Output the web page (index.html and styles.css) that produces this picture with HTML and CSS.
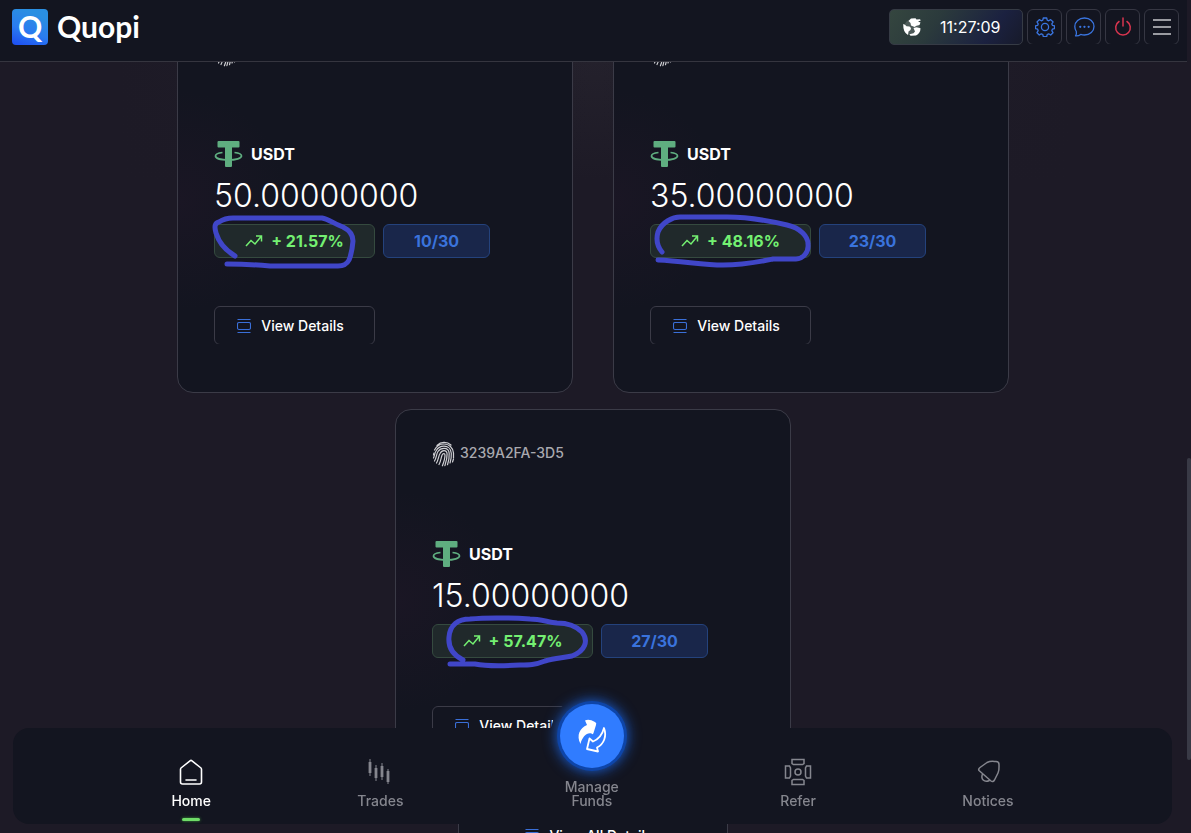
FILE: index.html
```html
<!DOCTYPE html>
<html lang="en">
<head>
    <meta charset="UTF-8">
    <meta name="viewport" content="width=device-width, initial-scale=1.0">
    <title>Quopi</title>
    <link rel="stylesheet" href="styles.css">
</head>
<body>
    <!-- shared icons -->
    <svg class="sprite" aria-hidden="true">
        <symbol id="finger" viewBox="0 0 24 26">
            <g fill="none" stroke="currentColor" stroke-width="1.2" stroke-linecap="round">
                <path d="M5 4.500C9 .5 15 .5 19 4M2.500 9C5 4 8.500 3 12 3c5 0 9 3.500 9.500 9v5"/>
                <path d="M1.500 17c1-2 1-5 2.500-7C6 6.500 9 5.200 12 5.200c4 0 7 2.800 7.300 7 .2 3.300-.3 6.800-1.300 9.800"/>
                <path d="M2.500 20c2-3 1.800-7 3.500-9.500C7.500 8.300 9.500 7.400 12 7.400c3 0 5 2 5.200 5 .2 4-.6 8-1.700 11.300"/>
                <path d="M4.500 22c2-3.500 2-7 3.500-9.500C9 10.500 10.500 9.600 12 9.600c2 0 3 1.400 3.100 3.400.1 4-1 8-2.200 11.600"/>
                <path d="M7 23.500c2-3.500 2-7 3.200-9.800.6-1.500 2.800-1.700 2.800.3 0 3.500-1.300 7.500-2.600 10.800M20.500 21l1-3M1.500 14l.4-2"/>
            </g>
        </symbol>
        <symbol id="tether" viewBox="0 0 28 28">
            <path fill="#5fae80" d="M4 1h20q1 0 1 1v4.500q0 1-1 1h-6.500V26q0 1-1 1h-5q-1 0-1-1V7.500H4q-1 0-1-1V2q0-1 1-1z"/>
            <path fill="none" stroke="#5fae80" stroke-width="1.700" d="M8 12.500C3.500 13 1 14.500 1 16c0 2.300 5.500 4 13 4s13-1.700 13-4c0-1.500-2.500-3-7-3.500"/>
        </symbol>
        <symbol id="trend" viewBox="0 0 18 14">
            <path fill="none" stroke="currentColor" stroke-width="1.500" d="M1 12l5-5.500 4 3.500 6.500-8M11 2h5.500v5.500"/>
        </symbol>
        <symbol id="frame" viewBox="0 0 14 14">
            <path fill="none" stroke="currentColor" stroke-width="1.100" d="M.5 .5h13M.5 13.500h13M2 3.500h10q1.500 0 1.500 1.500v4q0 1.500-1.500 1.500H2Q.5 10.500.5 9V5q0-1.500 1.500-1.500z"/>
        </symbol>
    </svg>

    <header class="topbar">
        <a class="brand" href="#">
            <span class="brand-mark">Q</span>
            <span class="brand-name">Quopi</span>
        </a>
        <div class="tools">
            <div class="clock">
                <svg width="20" height="20" viewBox="0 0 20 20" aria-hidden="true">
                    <circle cx="10" cy="10.500" r="8" fill="#fff" fill-opacity=".15"/>
                    <path fill="#fff" d="M1.200 7q2 .2 3.300 2.200l3 .3 1.500 1.500-.5 2-2 1.500-.5 3.500Q1 15.500 1.200 7zM6.500 4L9 1.500l4.500-.2 1 1.200 3.500-.2.8 1.200-2.800 1 2.500 1-1 2.500-3 .8-2 1.200L9 8.500 8.500 6zM11.500 11l3-.8 4 1Q18.500 16 14 18.500l-5.500.3-1-1.500 4-1 1.500-1.800z"/>
                </svg>
                <time>11:27:09</time>
            </div>
            <button class="tool blue" aria-label="Settings">
                <svg width="20" height="20" viewBox="0 0 20 20" fill="none" stroke="currentColor" stroke-width="1.300" stroke-linejoin="round">
                    <path d="M8.300 1h3.400l.5 2.200 1.500.6 2-1.200 2.400 2.400-1.300 1.900.7 1.500 2 .4v2.800l-2.100.6-.6 1.500 1.200 2-2.300 2.300-2-1.200-1.500.7-.5 2.200H8.300l-.5-2.200-1.500-.7-2 1.200L2 15.700l1.200-2-.6-1.500L.5 11.600V8.800l2.100-.4.6-1.500L2 5l2.300-2.400 2 1.200 1.500-.6z"/>
                    <circle cx="10" cy="10" r="3.600"/>
                </svg>
            </button>
            <button class="tool blue" aria-label="Messages">
                <svg width="22" height="20" viewBox="0 0 22 20" fill="none" stroke="currentColor" stroke-width="1.300" stroke-linejoin="round">
                    <path d="M11.500 1C17 1 21 4.800 21 9.500S17 18 11.500 18c-1.500 0-2.600-.2-3.800-.6C6 18.700 4 19 2.500 18.800c1-1.300 1.200-2.600.8-4.300C2.300 13 1.800 11.500 1.800 9.500 1.800 4.800 6 1 11.500 1z"/>
                    <path stroke-width="2.200" stroke-linecap="round" d="M7.200 9.800h.1M11.400 9.800h.1M15.600 9.800h.1"/>
                </svg>
            </button>
            <button class="tool red" aria-label="Log out">
                <svg width="18" height="20" viewBox="0 0 18 20" fill="none" stroke="currentColor" stroke-width="1.500" stroke-linecap="round">
                    <path d="M9 1v8M5 4.500a7.300 7.300 0 1 0 8 0"/>
                </svg>
            </button>
            <button class="tool" aria-label="Menu">
                <svg width="18" height="18" viewBox="0 0 18 18" stroke="currentColor" stroke-width="1.500">
                    <path d="M0 2h18M0 9h18M0 16h18"/>
                </svg>
            </button>
        </div>
    </header>

    <main class="content">
        <div class="cards">
            <article class="card">
                <div class="card-id"><svg><use href="#finger"/></svg></div>
                <div class="coin"><svg><use href="#tether"/></svg>USDT</div>
                <div class="amount">50.00000000</div>
                <div class="badges">
                    <span class="badge gain"><svg><use href="#trend"/></svg>+ 21.57%</span>
                    <span class="badge days">10/30</span>
                </div>
                <button class="details"><svg><use href="#frame"/></svg>View Details</button>
                <svg class="marker" viewBox="0 0 396 384" aria-hidden="true">
                    <path d="M58 247C48 241 42 234 39 224C37 217 38 214 42 213Q48 209 56 209H145C151 210 158 215 166 218C174 222 176 227 176 232Q175 244 172 251Q169 257 161 257H93Q72 255 50 255"/>
                </svg>
            </article>

            <article class="card">
                <div class="card-id"><svg><use href="#finger"/></svg></div>
                <div class="coin"><svg><use href="#tether"/></svg>USDT</div>
                <div class="amount">35.00000000</div>
                <div class="badges">
                    <span class="badge gain"><svg><use href="#trend"/></svg>+ 48.16%</span>
                    <span class="badge days">23/30</span>
                </div>
                <button class="details"><svg><use href="#frame"/></svg>View Details</button>
                <svg class="marker" viewBox="0 0 396 384" aria-hidden="true">
                    <path d="M49 243C44 237 43 230 45 223C49 213 60 208 67 208H114C135 208 157 212 174 216C188 219 195 228 195 235C196 243 190 250 183 250H160C145 253 131 256 110 256C90 256 70 252 45 251"/>
                </svg>
            </article>

            <article class="card">
                <div class="card-id"><svg><use href="#finger"/></svg>3239A2FA-3D5</div>
                <div class="coin"><svg><use href="#tether"/></svg>USDT</div>
                <div class="amount">15.00000000</div>
                <div class="badges">
                    <span class="badge gain"><svg><use href="#trend"/></svg>+ 57.47%</span>
                    <span class="badge days">27/30</span>
                </div>
                <button class="details"><svg><use href="#frame"/></svg>View Details</button>
                <svg class="marker" viewBox="0 0 396 384" aria-hidden="true">
                    <path d="M68 251C58 246 53 238 54 228C55 216 63 210 75 210C95 208 118 209 135 210C145 210 153 213 162 214C172 214 181 217 187 223C194 232 190 242 177 247C168 249 160 249 150 252C140 256 134 256 125 256C108 257 90 257 80 255H55"/>
                </svg>
            </article>
        </div>
        <button class="all-details"><svg><use href="#frame"/></svg>View All Details</button>
    </main>

    <nav class="dock">
        <a class="dock-item active" href="#">
            <svg width="28" height="28" viewBox="0 0 28 28" fill="none" stroke="currentColor" stroke-width="1.600" stroke-linejoin="round" stroke-linecap="round">
                <path d="M13 2.800Q14 2 15 2.800L24 10Q24.500 10.500 24.500 11.500V24Q24.500 26 22.500 26H5.500Q3.500 26 3.500 24V11.500Q3.500 10.500 4 10zM9 22h10"/>
            </svg>
            Home
        </a>
        <a class="dock-item" href="#">
            <svg width="28" height="28" viewBox="0 0 28 28" stroke="currentColor">
                <path d="M4 1v17M10 7v16M16 5v17M22 11v15"/>
                <path stroke-width="2.800" d="M4 4v11M10 10v10M16 8v11M22 13v11"/>
            </svg>
            Trades
        </a>
        <a class="dock-item manage" href="#">
            <span class="ring"><span class="disc">
                <svg width="32" height="36" viewBox="0 0 32 36">
                    <path fill="#fff" d="M9 2.500Q13 .5 19 4Q21 5 20 7L17.500 15Q17 17 15.500 15.500C11 14 6 19 4.500 26C0 17 4 10 11 7Z"/>
                    <path fill="none" stroke="#fff" stroke-width="1.800" stroke-linejoin="round" d="M28 10C31 18 28 26 21 29.500L22 33.500L11 31L13.500 20.500L17 23.500C23 21 26.500 16 28 10Z"/>
                </svg>
            </span></span>
            Manage<br>Funds
        </a>
        <a class="dock-item" href="#">
            <svg width="28" height="28" viewBox="0 0 28 28" fill="none" stroke="currentColor" stroke-width="1.500">
                <path d="M8 1.500h12v4l-1.500 1h-9L8 5.500zM8 26.500h12v-4l-1.500-1h-9L8 22.500zM1.500 8h4l1 2v8l-1 2h-4zM26.500 8h-4l-1 2v8l1 2h4z"/>
                <circle cx="14" cy="14" r="3"/>
            </svg>
            Refer
        </a>
        <a class="dock-item" href="#">
            <svg width="28" height="28" viewBox="0 0 28 28" fill="none" stroke="currentColor" stroke-width="1.500" stroke-linejoin="round">
                <path d="M13 4.500C17 2.500 20 3.500 22 3.500Q25 3.500 25 6.500C25 9 25.500 12 24 15L20.500 22Q19 24.500 17 23L5 12.500Q4 11 6 9.500zM8.500 16C6.500 21 10 25 15.500 22.500"/>
            </svg>
            Notices
        </a>
    </nav>

    <div class="scrollbar"></div>
</body>
</html>
```

FILE: styles.css
```css
* {
    box-sizing: border-box;
}
html, body {
    height: 100%;
    margin: 0;
    overflow: hidden;
}
body {
    font-family: Inter, "Liberation Sans", sans-serif;
    font-size: 14px;
    color: #fff;
    background: linear-gradient(90deg, #1d1a26 10%, transparent 50%, #1d1a26 90%), linear-gradient(#24212c 60px, #1d1a26 180px);
}
button {
    font: inherit;
    color: inherit;
    background: none;
    padding: 0;
    cursor: pointer;
}
a {
    color: inherit;
    text-decoration: none;
}
.sprite {
    position: absolute;
    width: 0;
    height: 0;
}

/* top bar */
.topbar {
    position: fixed;
    top: 0;
    left: 0;
    right: 4px;
    z-index: 10;
    height: 62px;
    padding: 9px 8px 0 12px;
    display: flex;
    justify-content: space-between;
    align-items: flex-start;
    background: #131520;
    border-bottom: 1px solid #35353f;
}
.brand {
    display: flex;
    align-items: flex-start;
    gap: 9px;
    font-family: Lato, sans-serif;
    font-weight: 700;
}
.brand-mark {
    width: 36px;
    height: 36px;
    border-radius: 4px;
    text-align: center;
    font-size: 30px;
    line-height: 34px;
    background: linear-gradient(200deg, #2a8fe2 20%, #2a7cf0 60%, #1d4cf2);
}
.brand-name {
    font-size: 30px;
    line-height: 34px;
}
.tools {
    display: flex;
    gap: 4px;
}
.clock {
    width: 134px;
    height: 36px;
    padding: 0 12px;
    display: flex;
    align-items: center;
    gap: 18px;
    font-size: 16px;
    border: 1px solid #363b45;
    border-radius: 5px;
    background: linear-gradient(125deg, #35463f, #2b3a3c 35%, #1b2140 75%, #171a2a);
}
.tool {
    width: 35px;
    height: 36px;
    display: flex;
    align-items: center;
    justify-content: center;
    border: 1px solid #363743;
    border-radius: 6px;
    color: #c8c8cc;
    clip-path: inset(0 0 1px 0);
}
.tool.blue {
    color: #3a75e0;
}
.tool.red {
    color: #d8354f;
}

/* cards */
.content {
    margin-right: 5px;
    padding-top: 9px;
    display: flex;
    flex-direction: column;
    align-items: center;
}
.cards {
    max-width: 1000px;
    display: flex;
    flex-wrap: wrap;
    justify-content: center;
    gap: 16px 40px;
}
.card {
    position: relative;
    width: 396px;
    height: 384px;
    padding: 32px 36px;
    border: 1px solid #3b3b47;
    border-radius: 16px;
    background: radial-gradient(circle at 0 50%, #1a1624, #131520 110px);
}
.card-id {
    height: 20px;
    display: flex;
    align-items: center;
    gap: 4px;
    font-weight: 500;
    color: #a9a9af;
}
.card-id svg {
    width: 24px;
    height: 26px;
    margin-top: 4px;
    color: #cfcfd3;
}
.coin {
    margin-top: 78px;
    height: 28px;
    display: flex;
    align-items: center;
    gap: 8px;
    font-size: 16px;
    font-weight: 700;
}
.coin svg {
    width: 29px;
    height: 28px;
}
.amount {
    margin-top: 8px;
    font-size: 32px;
    line-height: 40px;
    font-weight: 300;
}
.badges {
    margin-top: 8px;
    display: flex;
    gap: 8px;
}
.badge {
    height: 34px;
    display: flex;
    align-items: center;
    justify-content: center;
    gap: 8px;
    border-radius: 6px;
    font-size: 16px;
    font-weight: 700;
}
.badge svg {
    width: 18px;
    height: 14px;
}
.gain {
    width: 161px;
    color: #74f072;
    background: #20292b;
    border: 1px solid #354a3f;
}
.days {
    width: 107px;
    color: #3a73dc;
    background: #19264a;
    border: 1px solid #24427c;
}
.details, .all-details {
    display: flex;
    align-items: center;
    justify-content: center;
    gap: 10px;
    height: 39px;
    padding-right: 8px;
    border: 1px solid #3b3b47;
    border-radius: 6px;
    font-weight: 500;
}
.details {
    width: 161px;
    margin-top: 48px;
    clip-path: inset(0 0 1px 0);
}
.details svg, .all-details svg {
    width: 14px;
    height: 14px;
    color: #3a6fd8;
}
.all-details {
    width: 270px;
    margin-top: 23px;
    flex-shrink: 0;
    background: #131520;
}
.marker {
    position: absolute;
    top: -1px;
    left: -1px;
    width: 396px;
    height: 384px;
    pointer-events: none;
    fill: none;
    stroke: #4046c8;
    stroke-width: 5;
    stroke-linecap: round;
    stroke-linejoin: round;
}

/* bottom dock */
.dock {
    position: fixed;
    left: 13px;
    right: 19px;
    bottom: 9px;
    z-index: 10;
    height: 96px;
    padding: 0 12px;
    display: flex;
    justify-content: space-evenly;
    border-radius: 16px;
    background: #131520;
}
.dock-item {
    position: relative;
    padding-top: 30px;
    display: flex;
    flex-direction: column;
    align-items: center;
    gap: 5px;
    line-height: 20px;
    font-weight: 500;
    color: #85868e;
}
.active {
    color: #fff;
}
.active::after {
    content: "";
    width: 18px;
    height: 3px;
    margin-top: 2px;
    border-radius: 2px;
    background: #6fdc68;
    box-shadow: 0 0 3px #3f9d3c;
}
.manage {
    display: block;
    width: 84px;
    padding: 0;
    text-align: center;
    line-height: 14px;
}
.ring {
    width: 84px;
    height: 84px;
    margin: -34px 0 2px;
    display: flex;
    align-items: center;
    justify-content: center;
    border-radius: 50%;
    background: #131520;
}
.disc {
    width: 64px;
    height: 64px;
    display: flex;
    align-items: center;
    justify-content: center;
    border-radius: 50%;
    background: #307cff;
    box-shadow: 0 0 0 3px #0e45a8, 0 0 14px 3px #1b62dc;
}

.scrollbar {
    position: fixed;
    top: 458px;
    right: 0;
    z-index: 5;
    width: 4px;
    height: 302px;
    border-radius: 2px;
    background: #393a46;
}
```
